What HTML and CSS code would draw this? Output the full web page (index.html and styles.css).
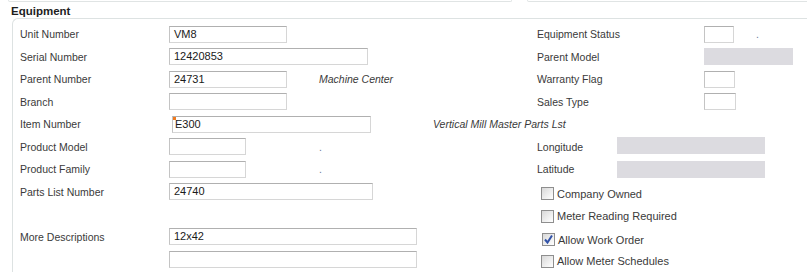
FILE: index.html
```html
<!DOCTYPE html>
<html lang="en">
<head>
    <meta charset="UTF-8">
    <title>Equipment</title>
    <link rel="stylesheet" href="styles.css">
</head>
<body>

    <!-- Bas des panneaux precedents -->
    <div class="prev-row">
        <div class="prev-box prev-left"></div>
        <div class="prev-box prev-right"></div>
    </div>

    <h3 class="section-title">Equipment</h3>

    <div class="panel">
        <div class="row">
            <div class="lhalf">
                <span class="label">Unit Number</span>
                <span class="input w118">VM8</span>
            </div>
            <div class="rhalf">
                <span class="label rlabel">Equipment Status</span>
                <span class="input w30"></span>
                <span class="dot dot-status">.</span>
            </div>
        </div>

        <div class="row">
            <div class="lhalf">
                <span class="label">Serial Number</span>
                <span class="input w199">12420853</span>
            </div>
            <div class="rhalf">
                <span class="label rlabel">Parent Model</span>
                <span class="readonly w89"></span>
            </div>
        </div>

        <div class="row">
            <div class="lhalf">
                <span class="label">Parent Number</span>
                <span class="input w118">24731</span>
                <span class="desc desc-parent">Machine Center</span>
            </div>
            <div class="rhalf">
                <span class="label rlabel">Warranty Flag</span>
                <span class="input w31"></span>
            </div>
        </div>

        <div class="row">
            <div class="lhalf">
                <span class="label">Branch</span>
                <span class="input w118"></span>
            </div>
            <div class="rhalf">
                <span class="label rlabel">Sales Type</span>
                <span class="input w32"></span>
            </div>
        </div>

        <div class="row">
            <div class="lhalf">
                <span class="label">Item Number</span>
                <span class="input w199 required">E300<i class="marker"></i></span>
                <span class="desc desc-item">Vertical Mill Master Parts Lst</span>
            </div>
        </div>

        <div class="row">
            <div class="lhalf">
                <span class="label">Product Model</span>
                <span class="input w77"></span>
                <span class="dot dot-left">.</span>
            </div>
            <div class="rhalf">
                <span class="label glabel">Longitude</span>
                <span class="readonly w148 geo-long"></span>
            </div>
        </div>

        <div class="row">
            <div class="lhalf">
                <span class="label">Product Family</span>
                <span class="input w77"></span>
                <span class="dot dot-left">.</span>
            </div>
            <div class="rhalf">
                <span class="label glabel">Latitude</span>
                <span class="readonly w148"></span>
            </div>
        </div>

        <div class="row">
            <div class="lhalf">
                <span class="label">Parts List Number</span>
                <span class="input w204">24740</span>
            </div>
            <div class="rhalf">
                <label class="check shift-down"><span class="box"></span>Company Owned</label>
            </div>
        </div>

        <div class="row">
            <div class="lhalf"></div>
            <div class="rhalf">
                <label class="check shift-down"><span class="box"></span>Meter Reading Required</label>
            </div>
        </div>

        <div class="row">
            <div class="lhalf">
                <span class="label">More Descriptions</span>
                <span class="input w248">12x42</span>
            </div>
            <div class="rhalf">
                <label class="check checked shift-more"><span class="box"><svg viewBox="0 0 13 13" width="13" height="13"><path d="M3 6.5 L5.5 9.5 L10 2.5" fill="none" stroke="#3152a8" stroke-width="2"/></svg></span>Allow Work Order</label>
            </div>
        </div>

        <div class="row">
            <div class="lhalf">
                <span class="label"></span>
                <span class="input w248"></span>
            </div>
            <div class="rhalf">
                <label class="check shift-down"><span class="box"></span>Allow Meter Schedules</label>
            </div>
        </div>
    </div>

</body>
</html>
```

FILE: styles.css
```css
/* Page */
body {
    margin: 0;
    font-family: 'Liberation Sans', Arial, sans-serif;
    font-size: 10.5px;
    color: #3a3a3a;
    background: #fff;
    overflow: hidden;
}

/* Bas des panneaux du dessus */
.prev-row {
    display: flex;
    height: 2px;
}

.prev-box {
    height: 1px;
    border: 1px solid #e0e4e4;
    border-top: none;
    border-radius: 0 0 5px 5px;
}

.prev-left {
    margin-left: 8px;
    width: 502px;
}

.prev-right {
    margin-left: 15px;
    flex: 1;
    margin-right: -10px;
}

.section-title {
    margin: 2px 0 0 11px;
    font-size: 11.5px;
    font-weight: bold;
    color: #1e1e1e;
    line-height: 14px;
}

/* Cadre principal */
.panel {
    margin: 0 0 0 12px;
    border-top: 1px solid #dde2e2;
    border-left: 1px solid #dde2e2;
    border-top-left-radius: 6px;
    padding-top: 4px;
    height: 260px;
}

.row {
    display: flex;
    align-items: center;
    height: 22.5px;
}

.lhalf {
    display: flex;
    align-items: center;
    width: 517px;
    padding-left: 7px;
    white-space: nowrap;
}

.rhalf {
    display: flex;
    align-items: center;
    white-space: nowrap;
}

.label {
    width: 149px;
    flex-shrink: 0;
}

.rlabel {
    width: 167px;
}

.glabel {
    width: 80px;
}

/* Champs */
.input {
    position: relative;
    box-sizing: border-box;
    height: 17px;
    padding: 0 4px;
    border: 1px solid #d6d6d6;
    border-top-color: #b0b0b0;
    border-left-color: #c4c4c4;
    background: #fff;
    font-size: 11px;
    line-height: 15px;
    color: #1a1a1a;
    flex-shrink: 0;
}

.readonly {
    height: 17px;
    background: #dcdbe0;
    flex-shrink: 0;
}

.w30 { width: 30px; }
.w31 { width: 31px; }
.w32 { width: 32px; }
.w77 { width: 77px; }
.w89 { width: 89px; }
.w118 { width: 118px; }
.w148 { width: 148px; }
.w199 { width: 199px; }
.w204 { width: 204px; }
.w248 { width: 248px; }

.required {
    margin-left: 3px;
    padding-left: 2px;
}

.marker {
    position: absolute;
    left: 0;
    top: 0;
    width: 3px;
    height: 3px;
    background: #f07a1e;
}

.geo-long {
    margin-top: -3px;
}

.desc {
    font-style: italic;
    color: #3a3a3a;
}

.desc-parent {
    margin-left: 32px;
}

.desc-item {
    margin-left: 62px;
}

.dot {
    color: #6a7a9a;
}

.dot-left {
    margin-left: 73px;
}

.dot-status {
    margin-left: 22px;
}

/* Cases a cocher */
.check {
    display: flex;
    align-items: center;
    margin-left: 4px;
    font-size: 11px;
}

.shift-down {
    position: relative;
    top: 2px;
}

.shift-more {
    position: relative;
    top: 3px;
    margin-left: 5px;
}

.box {
    box-sizing: border-box;
    width: 13px;
    height: 13px;
    margin-right: 3px;
    border: 1px solid #8e8e8e;
    background: linear-gradient(135deg, #d8d8d8, #f4f4f4 70%, #fff);
    position: relative;
}

.box svg {
    position: absolute;
    left: -1px;
    top: -1px;
}
```
